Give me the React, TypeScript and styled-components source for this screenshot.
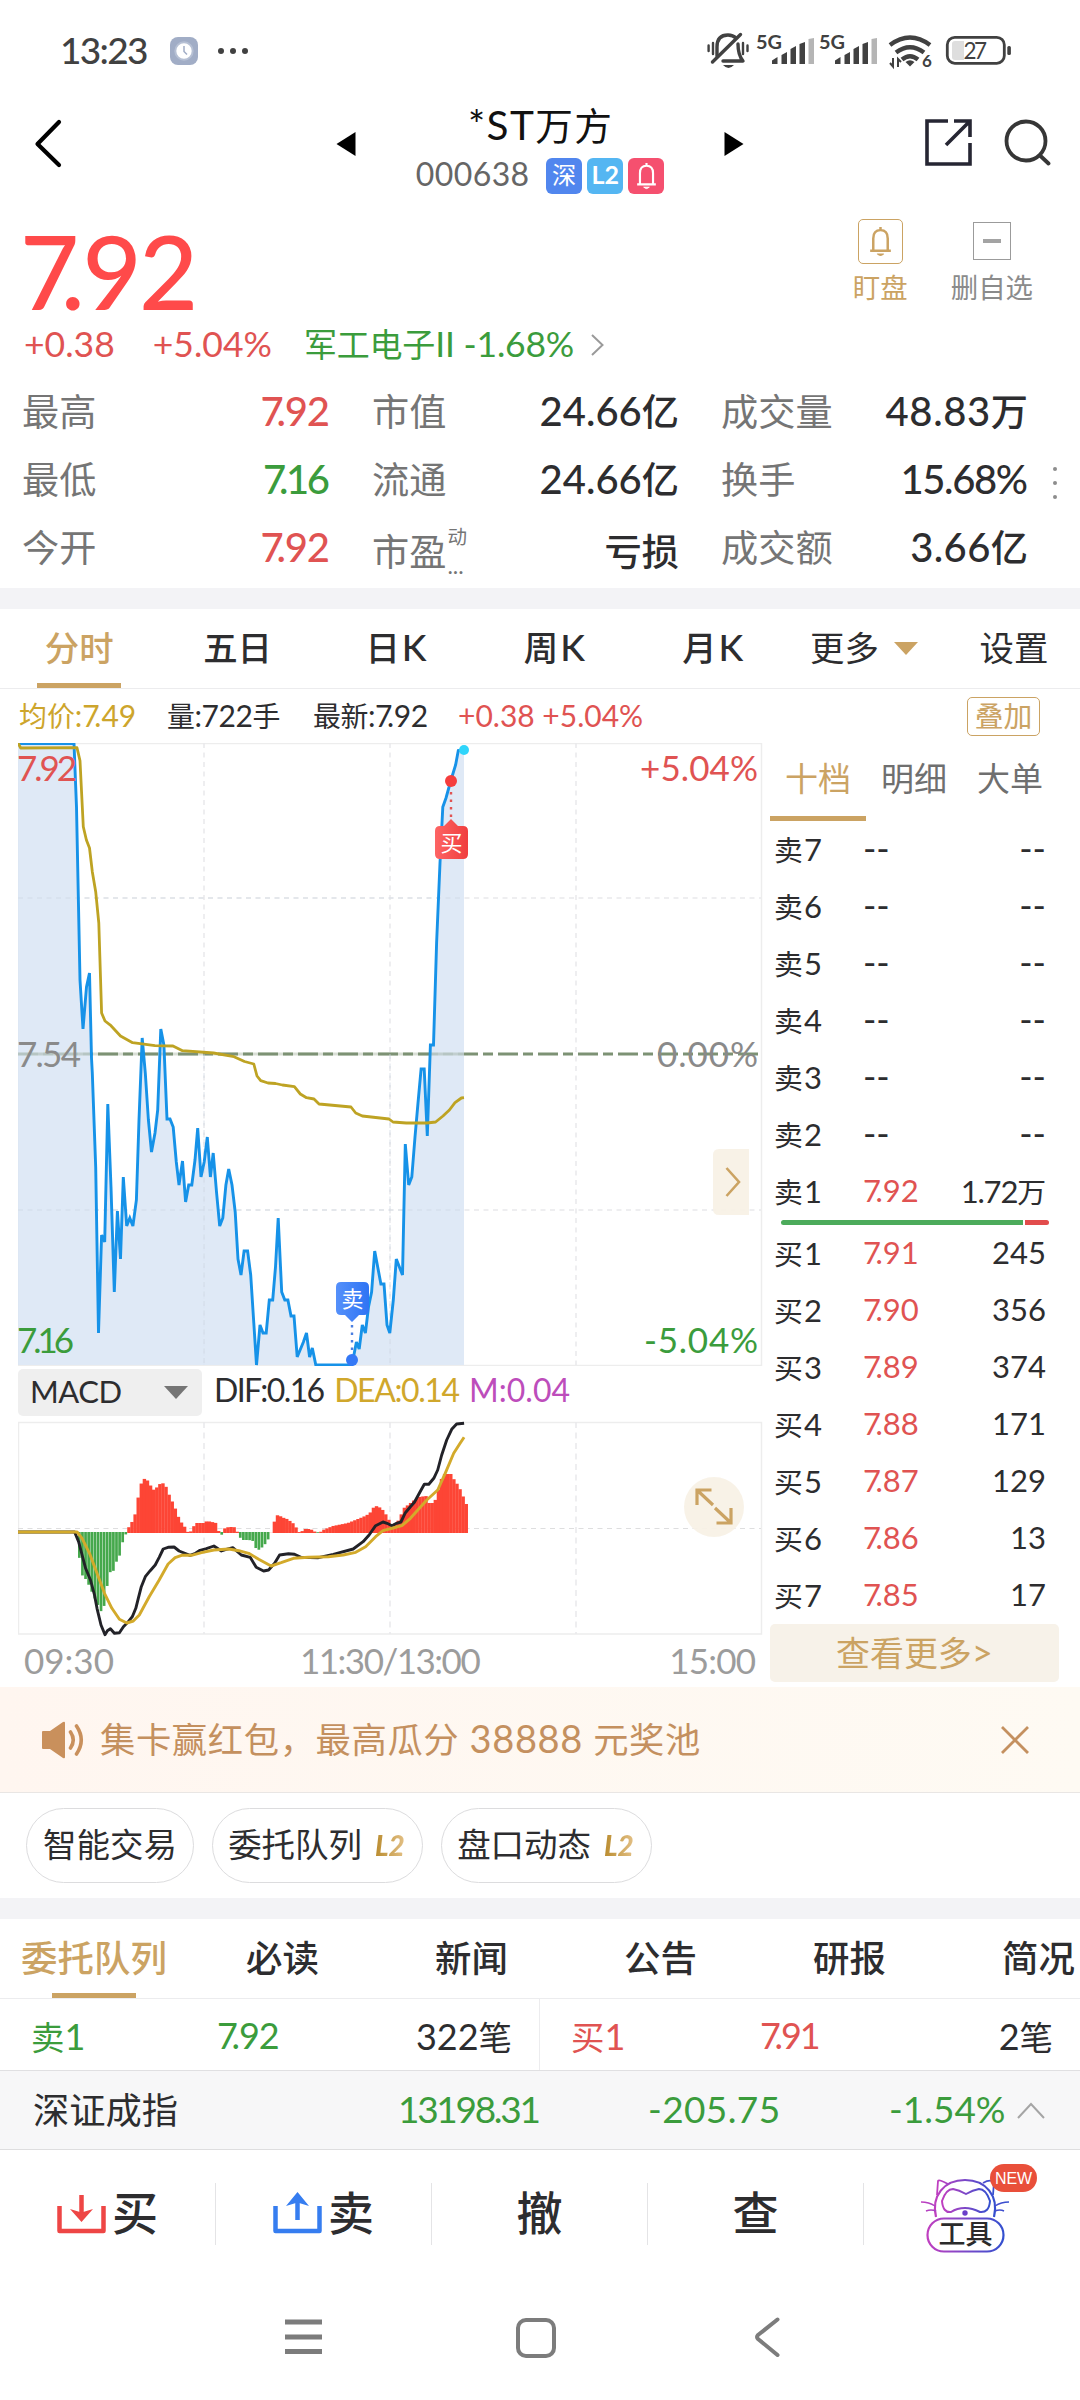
import React from "react";
import styled, { createGlobalStyle, css } from "styled-components";

const C = {
  red: "#e05352",
  green: "#3b9c3c",
  gold: "#cba363",
  ink: "#2d2d2f",
  label: "#757575",
  line: "#ececee",
};

const Global = createGlobalStyle`
  html, body { margin: 0; padding: 0; background: #fff; }
  * { box-sizing: border-box; }
  body { font-family: Lato, "Noto Sans CJK SC", sans-serif; color: ${C.ink}; }
`;

/* ---------- text ---------- */

const Txt = styled.span<{ $s: number; $c?: string; $w?: number; $ls?: number }>`
  display: inline-block;
  white-space: nowrap;
  font-size: ${(p) => p.$s}px;
  line-height: ${(p) => Math.round(p.$s * 1.2)}px;
  padding-bottom: 3px;
  color: ${(p) => p.$c || "inherit"};
  font-weight: ${(p) => p.$w || 400};
  letter-spacing: ${(p) => p.$ls || 0}px;
  margin-right: ${(p) => -(p.$ls || 0)}px;
`;
const Han = styled.span`
  font-family: "Noto Sans CJK SC", sans-serif;
  font-size: 0.93em;
`;
const Seven = styled.span`
  letter-spacing: -0.18em;
`;

type TProps = { s: number; c?: string; w?: number; ls?: number; children: string };
const T = ({ s, c, w, ls, children }: TProps) => (
  <Txt $s={s} $c={c} $w={w} $ls={ls}>
    {children.split(/([\u4e00-\u9fff，]+|7(?=\.))/).map((part, i) => {
      if (!part) return null;
      if (part === "7" && i % 2 === 1) return <Seven key={i}>7</Seven>;
      return i % 2 === 1 ? <Han key={i}>{part}</Han> : part;
    })}
  </Txt>
);

/* ---------- page frame ---------- */

const Page = styled.div`
  width: 1080px;
  height: 2400px;
  display: flex;
  flex-direction: column;
  background: #fff;
  overflow: hidden;
`;
const Band = styled.div`
  height: 21px;
  flex: none;
  background: #f3f3f6;
`;

/* ---------- status bar ---------- */

const Status = styled.div`
  height: 100px;
  flex: none;
  display: flex;
  align-items: center;
  justify-content: space-between;
  padding: 2px 69px 0 60px;
`;
const StatusLeft = styled.div`
  display: flex;
  align-items: center;
  gap: 19px;
`;
const Clock = styled.div`
  width: 91px;
`;

const StatusIcons = () => (
  <svg width="304" height="44" viewBox="707 29 304 44" fill="none" stroke="#414141">
    <g strokeWidth="3.4" strokeLinecap="round" strokeLinejoin="round">
      <path d="M717 56 V47 Q717 35 728 35 Q733 35 736 38" />
      <path d="M738 44 Q738 55 743 61 H723" />
      <path d="M740.5 34.5 L712.5 62" />
      <path d="M708.6 45.5 V51 M713 43 V54 M743 43 V54 M747.5 45.5 V51" strokeWidth="2.4" />
    </g>
    <path d="M723 65 H734 Q728.500 71 723 65Z" fill="#414141" stroke="none" />
    {[0, 63].map((d) => (
      <g key={d} fill="#414141" stroke="none" transform={`translate(${d} 0)`}>
        <text x="756" y="49" fontSize="19" fontWeight="700" fontFamily="Lato" textLength="26" lengthAdjust="spacingAndGlyphs">5G</text>
        <path d="M772 64 V60.500 L777.500 57 V64Z M781.500 64 V55 L787 52 V64Z M790.500 64 V49 L796 46 V64Z M799.500 64 V44 L805 42 V64Z" />
        <path d="M808.500 64 V39 L814 38 V64Z" fill="#b5b5b5" />
      </g>
    ))}
    <g strokeWidth="4.4">
      <path d="M890 45 Q910 30 930 45" />
      <path d="M896 52.500 Q910 42 924 52.500" />
      <path d="M902 59.500 Q910 53 918 59.500" />
    </g>
    <path d="M905.500 62 Q910 58.500 914.500 62 L910 66.500Z" fill="#414141" stroke="none" />
    <path d="M893 58 V66.500 L890 63 M898 67 V59 L901 62" strokeWidth="2" />
    <text x="922" y="67" fontSize="17" fontWeight="700" fontFamily="Lato" fill="#414141" stroke="none">6</text>
    <rect x="947.300" y="37.300" width="57" height="26" rx="7.500" strokeWidth="2.8" />
    <path d="M955 41 H964 V60 H955 Q952 60 952 57 V44 Q952 41 955 41Z" fill="#dedede" stroke="none" />
    <rect x="1007.300" y="46" width="3.600" height="9" rx="1.500" fill="#414141" stroke="none" />
    <text x="963.500" y="58.700" fontSize="22.500" fontFamily="Lato" fill="#414141" stroke="none" textLength="23.500">27</text>
  </svg>
);

/* ---------- title bar ---------- */

const Header = styled.div`
  height: 110px;
  flex: none;
  display: grid;
  grid-template-columns: 335px 410px 335px;
`;
const HeaderSide = styled.div<{ $end?: boolean }>`
  display: flex;
  justify-content: ${(p) => (p.$end ? "flex-end" : "flex-start")};
  padding: ${(p) => (p.$end ? "19px 29px 0 0" : "18px 0 0 34px")};
  gap: 32px;
`;
const HeaderMid = styled.div`
  display: flex;
  justify-content: space-between;
  padding: 31px 1px 0;
`;
const TitleBox = styled.div`
  display: flex;
  flex-direction: column;
  align-items: center;
  margin-top: -32px;
`;
const CodeRow = styled.div`
  display: flex;
  align-items: center;
  gap: 5px;
  margin-top: 3px;
`;
const CodeGap = styled.div`
  width: 7px;
`;
const Tag = styled.div<{ $bg: string }>`
  width: 36px;
  height: 36px;
  border-radius: 6px;
  background: ${(p) => p.$bg};
  color: #fff;
  display: flex;
  align-items: center;
  justify-content: center;
`;

const Bell = ({ w, h, sw }: { w: number; h: number; sw: number }) => (
  <svg width={w} height={h} viewBox="0 0 24 30" fill="none" stroke="currentColor" strokeWidth={sw} strokeLinejoin="round">
    <path d="M2 24 H22 M5 24 V12 Q5 4 12 4 Q19 4 19 12 V24 M12 1 V4" />
    <path d="M9 27 H15 Q12 30 9 27Z" fill="currentColor" strokeWidth="1" />
  </svg>
);

/* ---------- quote ---------- */

const Quote = styled.div`
  height: 168px;
  flex: none;
  display: flex;
  justify-content: space-between;
  padding: 0 47px 0 24px;
`;
const Price = styled.div`
  height: 112px;
  margin-left: -4px;
`;
const ChangeRow = styled.div`
  display: flex;
  align-items: center;
  height: 46px;
`;
const Gap = styled.div<{ $w: number }>`
  width: ${(p) => p.$w}px;
  flex: none;
`;
const Actions = styled.div`
  display: flex;
  gap: 43px;
`;
const Action = styled.div`
  display: flex;
  flex-direction: column;
  align-items: center;
  padding-top: 9px;
  color: ${C.gold};
`;
const ActionBox = styled.div<{ $sz: number; $round?: boolean; $c: string }>`
  width: ${(p) => p.$sz}px;
  height: ${(p) => p.$sz}px;
  margin: ${(p) => (p.$round ? "0 0 5px" : "3px 0 9px")};
  border: 1.500px solid ${(p) => p.$c};
  border-radius: ${(p) => (p.$round ? 5 : 0)}px;
  display: flex;
  align-items: center;
  justify-content: center;
`;
const Minus = styled.div`
  width: 18px;
  height: 4px;
  background: #a3a3a3;
`;

const Stats = styled.div`
  height: 210px;
  flex: none;
  display: grid;
  grid-template-columns: 308px 307px 307px 24px;
  grid-template-rows: repeat(3, 68px);
  column-gap: 42px;
  padding-left: 22px;
`;
const StatCell = styled.div<{ $drop?: boolean }>`
  display: flex;
  align-items: center;
  justify-content: space-between;
  padding-top: ${(p) => (p.$drop ? 7 : 0)}px;
`;
const PeLabel = styled.div`
  display: flex;
  align-items: stretch;
`;
const PeNote = styled.div`
  display: flex;
  flex-direction: column;
  justify-content: space-between;
  margin: -3px 0 0 1px;
  height: 46px;
`;
const Dots = styled.div`
  display: flex;
  flex-direction: column;
  align-items: center;
  justify-content: center;
  gap: 10px;
  margin-left: -54px;
  padding-top: 5px;
  grid-column: 4;
  grid-row: 2;
`;
const Dot = styled.i<{ $d: number; $c: string }>`
  width: ${(p) => p.$d}px;
  height: ${(p) => p.$d}px;
  border-radius: 50%;
  background: ${(p) => p.$c};
`;

/* ---------- tabs ---------- */

const Tabs = styled.div`
  height: 80px;
  flex: none;
  display: flex;
  border-bottom: 1.500px solid ${C.line};
  overflow: hidden;
`;
const Tab = styled.div<{ $w: number; $on?: boolean; $pl?: number }>`
  width: ${(p) => p.$w}px;
  flex: none;
  display: flex;
  align-items: center;
  justify-content: center;
  gap: 15px;
  padding-left: ${(p) => p.$pl || 0}px;
  padding-bottom: 1px;
  color: ${(p) => (p.$on ? C.gold : C.ink)};
  ${(p) =>
    p.$on &&
    css`
      background: linear-gradient(${C.gold}, ${C.gold}) center bottom / 84px 5px no-repeat;
    `}
`;
const Caret = styled.i<{ $c: string }>`
  border: 12px solid transparent;
  border-top: 13px solid ${(p) => p.$c};
  border-bottom: 0;
`;

/* ---------- chart area ---------- */

const InfoRow = styled.div`
  height: 54px;
  flex: none;
  display: flex;
  align-items: center;
  padding: 0 40px 0 19px;
`;
const InfoCell = styled.div<{ $w: number }>`
  width: ${(p) => p.$w}px;
`;
const Overlay = styled.div`
  margin-left: auto;
  width: 73px;
  height: 39px;
  border: 1.500px solid ${C.gold};
  border-radius: 5px;
  display: flex;
  align-items: center;
  justify-content: center;
`;
const Body = styled.div`
  height: 944px;
  flex: none;
  display: flex;
  padding-left: 18px;
`;
const ChartCol = styled.div`
  width: 752px;
  flex: none;
  display: flex;
  flex-direction: column;
`;
const MacdBar = styled.div`
  height: 55px;
  display: flex;
  padding-top: 3px;
`;
const MacdSelect = styled.div`
  width: 184px;
  height: 47px;
  background: #efefef;
  border-radius: 5px;
  display: flex;
  align-items: center;
  justify-content: space-between;
  padding: 0 14px 0 12px;
`;
const MacdVals = styled.div`
  display: flex;
  gap: 9px;
  align-items: center;
  height: 45px;
  margin-left: 12px;
`;
const Axis = styled.div`
  display: grid;
  grid-template-columns: 276px 1fr auto;
  width: 738px;
  padding: 2px 0 0 6px;
  color: #9c9c9c;
`;

const PRICE =
  "18,743.5 74,743.5 76.5,807 80,980 83,1029 86.5,987 89.5,973 91.5,1058 92.3,1073 95.7,1167 98.5,1333 101.6,1235 104.7,1242 107.8,1104 111,1187 114.3,1292 117.4,1211 120.5,1259 123.3,1177 126.7,1226 129.8,1218 132.9,1226 136.4,1200 139,1120 142.2,1038 145.3,1073 148.4,1120 151.5,1152 155,1133 157.7,1110 160.8,1029 163.9,1045 167,1119 170,1119 173.2,1127 176.3,1162 179,1185 182.5,1161 185.6,1202 188.7,1185 191.8,1185 195,1160 197.7,1128 201,1177 204.2,1162 207.3,1137 210.4,1177 213.2,1153 216.6,1193 219.7,1226 222.8,1218 225.9,1185 228.7,1169 232,1185 235.2,1212 238,1259 241,1275 244.1,1251 247.6,1251 250.7,1275 253.8,1323 256.5,1365 260,1325 263,1333 266.2,1333 269.3,1300 272.7,1300 275.5,1267 278.2,1218 281.7,1292 284.8,1300 287.9,1300 291,1316 294,1316 297.2,1357 303.4,1342 306.5,1333 309.6,1357 312.3,1348 315.8,1365 352,1365 356.4,1342 359.2,1349 362.3,1325 365.4,1333 368.5,1307 371.6,1292 374.7,1251 380.9,1284 384,1284 387,1325 389.8,1333 393.3,1300 396.3,1259 402.5,1275 405.3,1144 408.7,1185 411.8,1177 415,1137 418,1103 421.1,1069 424.2,1069 427.3,1136 430.4,1045 433.5,1045 436.6,943 440,863 442.8,807 446,798 451,780 455.6,765 458.3,750.5 464,750";
const AVG =
  "18,743 20.7,748 77,747.7 80,760.7 83.3,826.7 86.4,840 89.5,848 92.3,871.7 95.7,891.7 98.8,923 101.6,1013 105,1021 111,1025.7 120.5,1036 132.6,1042.7 155,1045.7 173,1046 182.5,1050.7 213.5,1053 234,1056.7 244.5,1061.5 253.8,1064 257,1076 260.7,1080.7 268,1083 275.5,1083.500 282.4,1085 294.4,1086.7 300.3,1094 306.5,1097.7 314,1099 319,1104 351,1107 355.7,1113 362.3,1116 389,1119 393,1122 406.3,1123 427,1123 435.6,1122 443,1116 449.4,1110 455,1102.7 461.4,1098 464,1097.7";

const Label = ({ x, y, c, end, w, children }: { x: number; y: number; c: string; end?: boolean; w: number; children: string }) => (
  <text x={x} y={y} fill={c} fontSize="35" fontFamily="Lato" textAnchor={end ? "end" : "start"} textLength={w}>
    {children}
  </text>
);

const PriceChart = () => (
  <svg width="746" height="623" viewBox="18 743 746 623" fill="none">
    <defs>
      <linearGradient id="buy"><stop stopColor="#fd6464" /><stop offset="1" stopColor="#f03e3e" /></linearGradient>
      <linearGradient id="sell"><stop stopColor="#5590fa" /><stop offset="1" stopColor="#2f74f4" /></linearGradient>
    </defs>
    <path d="M18.500 743.500 H761.500 V1365.500 H18.500Z" stroke="#ededed" strokeWidth="1.500" />
    <path d="M18 898 H761 M18 1210 H761 M204 743 V1365 M390 743 V1365 M576 743 V1365" stroke="#e9e9eb" strokeWidth="1.500" strokeDasharray="5 4.500" />
    <path d="M18 1054 H761" stroke="#7d9274" strokeWidth="3" strokeDasharray="20 5 10 5" />
    <polygon points={`${PRICE} 464,1365 18,1365`} fill="#dbe6f5" fillOpacity="0.88" />
    <path d="M18 1054 H464" stroke="#7d9274" strokeOpacity="0.3" strokeWidth="3" />
    <path d="M18 898 H464 M18 1210 H464 M204 1054 V1365 M390 1054 V1365" stroke="#cfd7e2" strokeWidth="1.200" strokeDasharray="5 4.500" strokeOpacity="0.6" />
    <polyline points={PRICE} stroke="#1692e8" strokeWidth="2.900" strokeLinejoin="miter" strokeMiterlimit="3" />
    <polyline points={AVG} stroke="#bea323" strokeWidth="2.800" strokeLinejoin="round" />
    <Label x={17} y={781} c={C.red} w={60}>7.92</Label>
    <Label x={17} y={1067} c="#8a8a8a" w={64}>7.54</Label>
    <Label x={17} y={1353} c={C.green} w={57}>7.16</Label>
    <Label x={758} y={781} c={C.red} end w={118}>+5.04%</Label>
    <Label x={758} y={1067} c="#8a8a8a" end w={101}>0.00%</Label>
    <Label x={758} y={1353} c={C.green} end w={114}>-5.04%</Label>
    <circle cx="464" cy="750" r="5" fill="#2fd5fb" />
    <path d="M451 792 V819" stroke={C.red} strokeWidth="2.400" strokeDasharray="2.500 5" />
    <circle cx="451" cy="781" r="6" fill="#f53d3d" />
    <path d="M451 819 L458 826 H463 Q468 826 468 831 V854 Q468 859 463 859 H440 Q435 859 435 854 V831 Q435 826 440 826 H444Z" fill="url(#buy)" />
    <text x="451.500" y="851" fontSize="22" fill="#fff" textAnchor="middle" fontFamily="Noto Sans CJK SC">买</text>
    <path d="M352 1325 V1354" stroke="#4b7fe0" strokeWidth="2.400" strokeDasharray="2.500 5" />
    <circle cx="352" cy="1360" r="6" fill="#3478f6" />
    <path d="M352 1322 L345 1315 H341 Q336 1315 336 1310 V1287 Q336 1282 341 1282 H364 Q369 1282 369 1287 V1310 Q369 1315 364 1315 H359Z" fill="url(#sell)" />
    <text x="352.500" y="1307" fontSize="22" fill="#fff" textAnchor="middle" fontFamily="Noto Sans CJK SC">卖</text>
    <path d="M749 1149 H719 Q713 1149 713 1155 V1209 Q713 1215 719 1215 H749Z" fill="#f8f1e5" fillOpacity="0.93" />
    <path d="M726.500 1168 L739 1182 L726.500 1196" stroke={C.gold} strokeWidth="2.600" />
  </svg>
);

/* histogram profile: x position, signed height from the zero line */
const HIST: [number, number][] = [
  [77, 0], [79.6, -28], [82.6, -44], [86.6, -48], [91, -58], [97, -71], [101.500, -80], [105, -72], [108, -48], [111, -38], [114, -39], [117, -28], [120, -23], [123, -9], [126, -2],
  [129, 6], [132, 11], [135, 18], [137.500, 32], [141, 49], [145, 55], [148, 52], [152, 45], [155, 42], [158, 48], [162, 50], [165, 49], [168, 41], [171, 34], [174, 28], [177, 20], [180, 12], [183, 9], [186, 4],
  [189, -1], [192.500, 4], [195.500, 10], [204, 10], [207, 12], [212, 11], [216, 10], [219, 1], [222, -3], [225, 5], [229, 6], [234, 6], [237, 2], [239, -4], [242, -8], [249, -8], [253, -9], [257, -19], [260, -17], [264, -14], [267, -9], [270, -5],
  [273, 7], [276.500, 18], [280, 17], [284, 15], [287, 14], [290, 12], [294, 9], [297, 4], [300.500, -1], [303.500, 4], [309, 4], [312.500, 3], [318, -1], [323, 3], [328, 5], [333, 7], [338, 8], [343, 9], [348, 10], [353, 12], [358, 14], [363, 16], [367, 18], [370, 20],
  [373, 25], [376, 27], [379, 26], [382, 24], [385, 20], [388, 15], [391, 9], [394.500, 9], [398, 12], [401, 18], [404, 25], [408, 28], [413, 32], [419, 36], [426, 37], [429, 30], [433, 30], [436, 34], [438, 42], [441, 53], [444, 59], [451, 59], [453, 55], [456, 51], [460, 44], [463, 37], [466, 29],
];
const heightAt = (x: number) => {
  const i = HIST.findIndex((p) => p[0] >= x);
  if (i <= 0) return i === 0 ? HIST[0][1] : HIST[HIST.length - 1][1];
  const [a, b] = [HIST[i - 1], HIST[i]];
  return a[1] + ((b[1] - a[1]) * (x - a[0])) / (b[0] - a[0]);
};
const BARS = Array.from({ length: 126 }, (_, i) => 79.4 + i * 3.095).filter((x) => x < 467);

const scale = (pts: number[][]) => pts.map(([x, y]) => `${(x / 2.0103).toFixed(1)},${(1360 + y / 3).toFixed(1)}`).join(" ");
const DIF = scale([[36,516],[150,516],[158,545],[165,585],[172,625],[182,660],[190,705],[195,745],[203,795],[211,824],[216,812],[222,806],[230,820],[240,818],[248,800],[258,785],[266,770],[273,745],[278,715],[284,680],[292,650],[302,632],[312,615],[320,592],[328,567],[338,562],[350,561],[360,573],[382,586],[393,580],[402,571],[415,566],[430,558],[445,573],[455,568],[468,563],[485,585],[503,592],[515,622],[530,633],[540,630],[552,610],[562,585],[580,581],[592,583],[605,592],[640,593],[670,583],[710,567],[730,545],[742,525],[755,497],[770,486],[778,490],[788,497],[797,490],[806,486],[815,458],[825,440],[833,427],[843,400],[853,373],[862,373],[872,355],[880,330],[888,285],[898,240],[908,208],[918,192],[933,190]]);
const DEA = scale([[36,516],[155,516],[165,535],[180,580],[195,640],[210,700],[225,745],[240,778],[255,789],[268,783],[280,765],[300,710],[320,660],[338,612],[352,593],[365,586],[385,586],[405,578],[430,570],[460,567],[480,572],[500,580],[520,598],[545,618],[565,608],[590,595],[620,592],[660,590],[690,585],[715,577],[735,560],[755,530],[770,512],[790,504],[808,497],[825,475],[840,450],[858,420],[880,390],[895,340],[912,280],[925,250],[933,232]]);

const MacdChart = () => (
  <svg width="746" height="216" viewBox="18 1421 746 216" fill="none">
    <path d="M18.500 1422.500 H761.500 V1634 H18.500Z" stroke="#ededed" strokeWidth="1.500" />
    <path d="M204 1422 V1634 M390 1422 V1634 M576 1422 V1634" stroke="#e9e9eb" strokeWidth="1.500" strokeDasharray="6 4.500" />
    <path d="M18 1528.500 H761" stroke="#dededf" strokeWidth="1.200" strokeDasharray="5 4.500" />
    {BARS.map((x) => {
      const h = heightAt(x);
      return h < 0 ? (
        <rect key={x} x={x - 1.4} y={1532} width={2.7} height={-h} fill="#45a84c" />
      ) : (
        <rect key={x} x={x - 1.7} y={1533 - h} width={3.4} height={h} fill="#fd4535" />
      );
    })}
    <polyline points={DIF} stroke="#222228" strokeWidth="2.900" strokeLinejoin="round" />
    <polyline points={DEA} stroke="#d3aa2b" strokeWidth="2.900" strokeLinejoin="round" />
    <circle cx="714" cy="1507" r="30" fill="#f8f1e5" fillOpacity="0.94" />
    <path d="M713 1505 L697 1490 M697 1505 V1490 H711.500 M715 1508 L731 1523 M731 1508 V1523 H716.500" stroke={C.gold} strokeWidth="3.200" />
  </svg>
);

/* ---------- order book ---------- */

const Book = styled.div`
  width: 310px;
  display: flex;
  flex-direction: column;
`;
const BookTabs = styled.div`
  height: 78px;
  display: flex;
`;
const BookTab = styled.div<{ $on?: boolean }>`
  width: 96px;
  padding-top: 13px;
  display: flex;
  justify-content: center;
  color: ${(p) => (p.$on ? C.gold : "#6f6f6f")};
  border-bottom: 5px solid ${(p) => (p.$on ? C.gold : "transparent")};
`;
const BookRow = styled.div`
  height: 57px;
  display: grid;
  grid-template-columns: 89px 1fr auto;
  align-items: center;
  padding: 1px 34px 0 4px;
`;
const BookBlock = styled.div`
  display: flex;
  flex-direction: column;
`;
const Ratio = styled.div`
  display: flex;
  gap: 2px;
  height: 5px;
  width: 268px;
  margin-left: 11px;
`;
const RatioPart = styled.div<{ $c: string; $g: number; $side: "l" | "r" }>`
  flex: ${(p) => p.$g};
  background: ${(p) => p.$c};
  border-radius: ${(p) => (p.$side === "l" ? "3px 0 0 3px" : "0 3px 3px 0")};
`;
const More = styled.div`
  width: 289px;
  height: 58px;
  background: #f7f2e9;
  border-radius: 5px;
  display: flex;
  align-items: center;
  justify-content: center;
`;

/* ---------- promo, chips ---------- */

const Promo = styled.div`
  height: 106px;
  flex: none;
  display: flex;
  align-items: center;
  padding: 0 50px 0 41px;
  background: linear-gradient(90deg, #fff6f0, #fefaf3);
  border-bottom: 1.500px solid #e9e6e4;
`;
const PromoText = styled.div`
  flex: 1;
  padding-left: 15px;
`;
const Chips = styled.div`
  height: 105px;
  flex: none;
  display: flex;
  align-items: flex-start;
  gap: 18px;
  padding: 15px 26px;
`;
const Chip = styled.div<{ $w: number }>`
  width: ${(p) => p.$w}px;
  height: 75px;
  border: 1.500px solid #dcdcde;
  border-radius: 38px;
  display: flex;
  align-items: center;
  justify-content: center;
  gap: 13px;
  padding-bottom: 2px;
`;
const L2 = styled.span`
  font: italic 900 28px/32px Lato, sans-serif;
  background: linear-gradient(90deg, #b98b2e, #e6c48c);
  -webkit-background-clip: text;
  color: transparent;
  padding-right: 2px;
`;

/* ---------- queue, index ---------- */

const Queue = styled.div`
  height: 71px;
  flex: none;
  display: grid;
  grid-template-columns: 540px 540px;
`;
const QueueHalf = styled.div<{ $first?: boolean }>`
  display: grid;
  grid-template-columns: ${(p) => (p.$first ? 186 : 189)}px 1fr auto;
  align-items: center;
  padding: 5px 27px 0 31px;
  border-right: ${(p) => (p.$first ? `1.500px solid ${C.line}` : "0")};
`;
const IndexBar = styled.div`
  height: 80px;
  flex: none;
  display: grid;
  grid-template-columns: 365px 250px 241px 127px auto;
  align-items: center;
  padding: 1px 0 0 33px;
  background: #f7f7f8;
  border-top: 1.500px solid #e0e0e2;
  border-bottom: 1.500px solid #dededf;
`;

/* ---------- bottom ---------- */

const TradeBar = styled.div`
  height: 128px;
  flex: none;
  display: grid;
  grid-template-columns: repeat(5, 216px);
  align-items: center;
`;
const TradeItem = styled.div<{ $last?: boolean }>`
  height: 62px;
  display: flex;
  align-items: center;
  justify-content: center;
  gap: 6px;
  padding: ${(p) => (p.$last ? "0 0 13px 14px" : "0 0 3px")};
  border-right: ${(p) => (p.$last ? "0" : `1.500px solid #e4e4e6`)};
`;
const NavBar = styled.div`
  flex: 1;
  display: grid;
  grid-template-columns: 231px 239px auto;
  align-items: start;
  padding: 39px 0 0 283px;
`;

const Arrow = ({ up, c }: { up?: boolean; c: string }) => (
  <svg width="49" height="44" viewBox="0 0 49 44" fill="none" stroke={c} strokeWidth="4.500">
    <path d="M2.500 15 V40 H46.500 V15" strokeLinejoin="round" />
    {up ? <path d="M24.500 29 V5" /> : <path d="M24.500 4 V26" />}
    <path d={up ? "M24.500 1 L36 15 L24.500 11.500 L13 15Z" : "M24.500 31 L36 18 L24.500 21.500 L13 18Z"} fill={c} stroke="none" />
  </svg>
);

const CatTools = () => (
  <svg width="120" height="92" viewBox="919 2161 120 92" fill="none">
    <defs>
      <linearGradient id="cat"><stop stopColor="#c03fc0" /><stop offset="1" stopColor="#3450cf" /></linearGradient>
    </defs>
    <g stroke="url(#cat)" strokeWidth="2.200">
      <path d="M936 2216 C931 2195 944 2179 965 2179 C986 2179 999 2195 994 2216" />
      <path d="M937 2194 L938 2180 Q939 2178 948 2183 M993 2194 L994 2181 Q990 2178 983 2182" strokeWidth="1.800" />
      <path d="M953 2188 Q959 2189 966 2193 Q973 2189 979 2188 Q986 2188 990 2200 Q989 2212 980 2211 Q972 2207 965 2207 Q957 2207 951 2211 Q943 2212 942 2200 Q946 2188 953 2188Z" strokeWidth="2" />
      <path d="M921 2201 Q929 2201 935 2205 M926 2210 Q931 2208 936 2210 M995 2205 Q1001 2201 1009 2201 M995 2210 Q1000 2208 1004 2210" strokeWidth="1.500" />
      <rect x="927.500" y="2217.500" width="76" height="33" rx="16.500" fill="#fff" />
    </g>
    <circle cx="965" cy="2212" r="2.700" fill="#6a3fc9" />
    <text x="965.500" y="2243" fontSize="27" fontWeight="500" fill="#2b2b2b" textAnchor="middle" fontFamily="Noto Sans CJK SC">工具</text>
    <rect x="990" y="2163" width="47" height="28" rx="14" fill="#e94f3a" />
    <text x="1013.500" y="2182.500" fontSize="16" fill="#fff" textAnchor="middle" fontFamily="Liberation Sans" textLength="37">NEW</text>
  </svg>
);

/* ---------- data ---------- */

const STATS: { l: string; v: string; c?: string; ls?: number }[] = [
  { l: "最高", v: "7.92", c: C.red, ls: -1.2 }, { l: "市值", v: "24.66亿" }, { l: "成交量", v: "48.83万", ls: 0.6 },
  { l: "最低", v: "7.16", c: C.green, ls: -2.4 }, { l: "流通", v: "24.66亿" }, { l: "换手", v: "15.68%", ls: -1.4 },
  { l: "今开", v: "7.92", c: C.red, ls: -1.2 }, { l: "市盈", v: "亏损" }, { l: "成交额", v: "3.66亿", ls: 0.4 },
];
const ASKS = [["卖7", "--", "--"], ["卖6", "--", "--"], ["卖5", "--", "--"], ["卖4", "--", "--"], ["卖3", "--", "--"], ["卖2", "--", "--"], ["卖1", "7.92", "1.72万"]];
const BIDS = [["买1", "7.91", "245"], ["买2", "7.90", "356"], ["买3", "7.89", "374"], ["买4", "7.88", "171"], ["买5", "7.87", "129"], ["买6", "7.86", "13"], ["买7", "7.85", "17"]];

const BookRows = ({ rows }: { rows: string[][] }) => (
  <>
    {rows.map(([n, p, q]) => (
      <BookRow key={n}>
        <T s={31} ls={1.2}>{n}</T>
        <T s={p === "--" ? 36 : 31} c={p === "--" ? C.ink : C.red}>{p}</T>
        <T s={q === "--" ? 36 : 31} ls={q.length > 3 ? -1.2 : 0}>{q}</T>
      </BookRow>
    ))}
  </>
);

export default function App() {
  return (
    <Page>
      <Global />
      <Status>
        <StatusLeft>
          <Clock><T s={37} c="#414141" w={500} ls={-1.7}>13:23</T></Clock>
          <svg width="28" height="28" viewBox="0 0 28 28" fill="none">
            <rect width="28" height="28" rx="8" fill="#a1adc6" />
            <circle cx="14" cy="14" r="8.700" fill="#fff" stroke="#b6c0d4" strokeWidth="2" />
            <path d="M14 9 V14.500 L17 17.500" stroke="#a1adc6" strokeWidth="1.500" />
          </svg>
          <svg width="32" height="8" viewBox="0 0 32 8" fill="#414141">
            <circle cx="4" cy="4" r="3" /><circle cx="16" cy="4" r="3" /><circle cx="28" cy="4" r="3" />
          </svg>
        </StatusLeft>
        <StatusIcons />
      </Status>

      <Header>
        <HeaderSide>
          <svg width="30" height="50" viewBox="0 0 30 50" fill="none" stroke="#000" strokeWidth="4.200" strokeLinecap="round" strokeLinejoin="round">
            <path d="M25 4 L3.500 26 L25 47" />
          </svg>
        </HeaderSide>
        <HeaderMid>
          <svg width="20" height="26" viewBox="0 0 20 26"><path d="M19.500 1 V25 L0.500 13Z" /></svg>
          <TitleBox>
            <T s={40.5} c="#111" ls={1.4}>*ST万方</T>
            <CodeRow>
              <T s={32} c="#666" ls={0.4}>000638</T>
              <CodeGap />
              <Tag $bg="#5186ee"><T s={26}>深</T></Tag>
              <Tag $bg="#54b6f2"><T s={25} w={700}>L2</T></Tag>
              <Tag $bg="#f5506f"><Bell w={23} h={28} sw={2.3} /></Tag>
            </CodeRow>
          </TitleBox>
          <svg width="20" height="26" viewBox="0 0 20 26"><path d="M0.500 1 V25 L19.500 13Z" /></svg>
        </HeaderMid>
        <HeaderSide $end>
          <svg width="47" height="48" viewBox="925 120 47 48" fill="none" stroke="#262633" strokeWidth="3.600">
            <path d="M948 122 H927 V165 H970 V144 M954 122 H970 V138 M970 122 L946 146" />
          </svg>
          <svg width="47" height="48" viewBox="1004 120 47 48" fill="none" stroke="#363636" strokeWidth="3.800" strokeLinecap="round">
            <circle cx="1026" cy="142" r="19.500" /><path d="M1040 156.500 L1048.500 164.500" />
          </svg>
        </HeaderSide>
      </Header>

      <Quote>
        <div>
          <Price><T s={102} w={500} c="#ff4a4a" ls={-2.5}>7.92</T></Price>
          <ChangeRow>
            <T s={35.5} c={C.red}>+0.38</T>
            <Gap $w={38} />
            <T s={35.5} c={C.red}>+5.04%</T>
            <Gap $w={32} />
            <T s={35.5} c={C.green} ls={-0.2}>军工电子II -1.68%</T>
            <Gap $w={16} />
            <svg width="15" height="24" viewBox="0 0 15 24" fill="none" stroke="#9a9a9a" strokeWidth="2"><path d="M2 2 L12.500 12 L2 22" /></svg>
          </ChangeRow>
        </div>
        <Actions>
          <Action>
            <ActionBox $sz={45} $round $c={C.gold}><Bell w={25} h={31} sw={2.4} /></ActionBox>
            <T s={29.5} c={C.gold}>盯盘</T>
          </Action>
          <Action>
            <ActionBox $sz={38} $c="#9b9b9b"><Minus /></ActionBox>
            <T s={29.5} c="#8b8b8b">删自选</T>
          </Action>
        </Actions>
      </Quote>

      <Stats>
        {STATS.map(({ l, v, c, ls }, i) => (
          <StatCell key={l} $drop={i === 7} style={{ gridColumn: (i % 3) + 1, gridRow: Math.floor(i / 3) + 1 }}>
            {i === 7 ? (
              <PeLabel>
                <T s={40} c={C.label}>市盈</T>
                <PeNote>
                  <T s={21} c={C.label}>动</T>
                  <T s={23} c={C.label}>...</T>
                </PeNote>
              </PeLabel>
            ) : (
              <T s={40} c={C.label}>{l}</T>
            )}
            <T s={40} w={500} c={c || C.ink} ls={ls}>{v}</T>
          </StatCell>
        ))}
        <Dots>
          {[0, 1, 2].map((i) => <Dot key={i} $d={4} $c="#8d8d8d" />)}
        </Dots>
      </Stats>

      <Band />

      <Tabs>
        <Tab $w={158.4} $on><T s={37} w={500}>分时</T></Tab>
        <Tab $w={158.4}><T s={37} w={500}>五日</T></Tab>
        <Tab $w={158.4}><T s={37} w={500} ls={2}>日K</T></Tab>
        <Tab $w={158.4}><T s={37} w={500} ls={2}>周K</T></Tab>
        <Tab $w={158.4}><T s={37} w={500} ls={2}>月K</T></Tab>
        <Tab $w={144}><T s={37}>更多</T><Caret $c={C.gold} /></Tab>
        <Tab $w={144} $pl={12}><T s={37}>设置</T></Tab>
      </Tabs>

      <InfoRow>
        <InfoCell $w={148}><T s={30} c="#cda52c">均价:7.49</T></InfoCell>
        <InfoCell $w={146}><T s={30} ls={-0.4}>量:722手</T></InfoCell>
        <InfoCell $w={145}><T s={30} ls={-0.4}>最新:7.92</T></InfoCell>
        <T s={30} c={C.red}>+0.38 +5.04%</T>
        <Overlay><T s={31} c={C.gold}>叠加</T></Overlay>
      </InfoRow>

      <Body>
        <ChartCol>
          <PriceChart />
          <MacdBar>
            <MacdSelect><T s={31} ls={-0.5}>MACD</T><Caret $c="#757575" /></MacdSelect>
            <MacdVals>
              <T s={32} ls={-1.6}>DIF:0.16</T>
              <T s={32} ls={-1.4} c="#d0a72c">DEA:0.14</T>
              <T s={32} c="#bd4dbb">M:0.04</T>
            </MacdVals>
          </MacdBar>
          <MacdChart />
          <Axis><T s={35}>09:30</T><T s={35} ls={-1.5}>11:30/13:00</T><T s={35} ls={-0.8}>15:00</T></Axis>
        </ChartCol>
        <Book>
          <BookTabs>
            <BookTab $on><T s={35.5}>十档</T></BookTab>
            <BookTab><T s={35.5}>明细</T></BookTab>
            <BookTab><T s={35.5}>大单</T></BookTab>
          </BookTabs>
          <BookBlock><BookRows rows={ASKS} /></BookBlock>
          <Ratio>
            <RatioPart $c="#4cab5b" $g={241} $side="l" />
            <RatioPart $c="#e24c4c" $g={24} $side="r" />
          </Ratio>
          <BookBlock><BookRows rows={BIDS} /></BookBlock>
          <More><T s={36.5} c={C.gold}>查看更多&gt;</T></More>
        </Book>
      </Body>

      <Promo>
        <svg width="44" height="38" viewBox="0 0 44 38" fill="none" stroke="#c9905c" strokeWidth="3.600" strokeLinecap="round">
          <path d="M1 11 Q1 10 2 10 H9 L22 1 Q24 0 24 2 V36 Q24 38 22 37 L9 28 H2 Q1 28 1 27Z" fill="#c9905c" stroke="none" />
          <path d="M29.500 11 Q35 19 29.500 27 M35.500 5 Q45 19 35.500 33" />
        </svg>
        <PromoText><T s={38} c="#c4905f" ls={0.6}>集卡赢红包，最高瓜分 38888 元奖池</T></PromoText>
        <svg width="30" height="28" viewBox="0 0 30 28" stroke="#c4905f" strokeWidth="2.800"><path d="M2 1 L28 27 M28 1 L2 27" /></svg>
      </Promo>

      <Chips>
        <Chip $w={168}><T s={36}>智能交易</T></Chip>
        <Chip $w={211}><T s={36}>委托队列</T><L2>L2</L2></Chip>
        <Chip $w={211}><T s={36}>盘口动态</T><L2>L2</L2></Chip>
      </Chips>

      <Band />

      <Tabs>
        {["委托队列", "必读", "新闻", "公告", "研报", "简况"].map((t, i) => (
          <Tab key={t} $w={i ? 189 : 188} $on={i === 0}><T s={39.2} w={500}>{t}</T></Tab>
        ))}
      </Tabs>

      <Queue>
        <QueueHalf $first>
          <T s={36} c={C.green}>卖1</T><T s={36} c={C.green} ls={-1}>7.92</T><T s={36}>322笔</T>
        </QueueHalf>
        <QueueHalf>
          <T s={36} c={C.red}>买1</T><T s={36} c={C.red} ls={-2}>7.91</T><T s={36}>2笔</T>
        </QueueHalf>
      </Queue>

      <IndexBar>
        <T s={39}>深证成指</T>
        <T s={37} c={C.green} ls={-2.3}>13198.31</T>
        <T s={37} c={C.green} ls={0.4}>-205.75</T>
        <T s={37} c={C.green}>-1.54%</T>
        <svg width="30" height="18" viewBox="0 0 30 18" fill="none" stroke="#a5a5a5" strokeWidth="2"><path d="M2 16 L15 2 L28 16" /></svg>
      </IndexBar>

      <TradeBar>
        <TradeItem><Arrow c="#ee4645" /><T s={49.5} w={500}>买</T></TradeItem>
        <TradeItem><Arrow up c="#367df0" /><T s={49.5} w={500}>卖</T></TradeItem>
        <TradeItem><T s={49.5} w={500}>撤</T></TradeItem>
        <TradeItem><T s={49.5} w={500}>查</T></TradeItem>
        <TradeItem $last><CatTools /></TradeItem>
      </TradeBar>

      <NavBar>
        <svg width="40" height="40" viewBox="0 0 40 40" stroke="#7c7c7c" strokeWidth="5"><path d="M2 5 H39 M2 20 H39 M2 34.500 H39" /></svg>
        <svg width="42" height="42" viewBox="0 0 42 42" fill="none" stroke="#7c7c7c" strokeWidth="4"><rect x="4" y="3" width="36" height="36" rx="8" /></svg>
        <svg width="28" height="42" viewBox="0 0 28 42" fill="none" stroke="#7c7c7c" strokeWidth="4" strokeLinecap="round" strokeLinejoin="round"><path d="M24.500 2.500 L5 18 Q3 20 5 22 L24.500 38" /></svg>
      </NavBar>
    </Page>
  );
}
